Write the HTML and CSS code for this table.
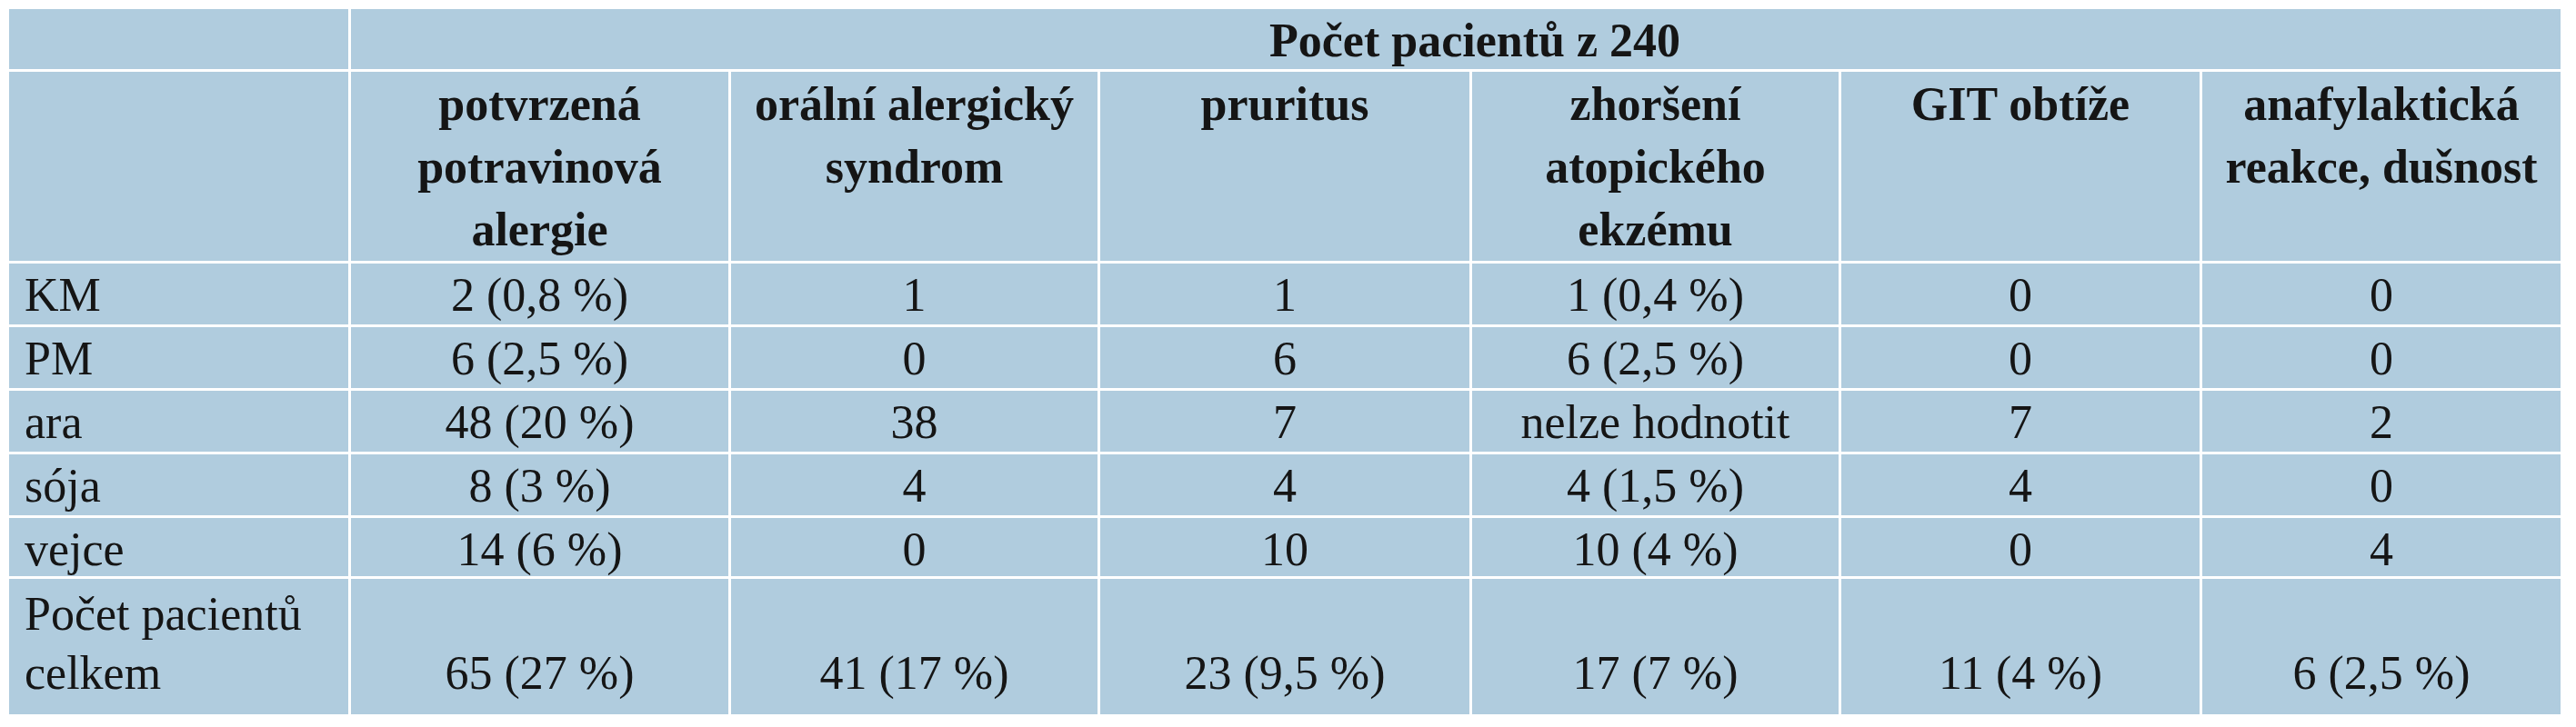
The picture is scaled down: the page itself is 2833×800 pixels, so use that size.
FILE: index.html
```html
<!DOCTYPE html>
<html lang="cs">
<head>
<meta charset="utf-8">
<title>Počet pacientů z 240</title>
<link rel="stylesheet" href="styles.css">
</head>
<body>
<table class="tbl">
  <colgroup>
    <col class="c0"><col class="c1"><col class="c2"><col class="c3"><col class="c4"><col class="c5"><col class="c6">
  </colgroup>
  <tr class="r-title">
    <td class="lbl"></td>
    <td class="title" colspan="6">Počet pacientů z 240</td>
  </tr>
  <tr class="r-head">
    <td class="lbl"></td>
    <td>potvrzená<br>potravinová<br>alergie</td>
    <td>orální alergický<br>syndrom</td>
    <td>pruritus</td>
    <td>zhoršení<br>atopického<br>ekzému</td>
    <td>GIT obtíže</td>
    <td>anafylaktická<br>reakce, dušnost</td>
  </tr>
  <tr class="r-data">
    <td class="lbl">KM</td><td>2 (0,8 %)</td><td>1</td><td>1</td><td>1 (0,4 %)</td><td>0</td><td>0</td>
  </tr>
  <tr class="r-data">
    <td class="lbl">PM</td><td>6 (2,5 %)</td><td>0</td><td>6</td><td>6 (2,5 %)</td><td>0</td><td>0</td>
  </tr>
  <tr class="r-data">
    <td class="lbl">ara</td><td>48 (20 %)</td><td>38</td><td>7</td><td>nelze hodnotit</td><td>7</td><td>2</td>
  </tr>
  <tr class="r-data">
    <td class="lbl">sója</td><td>8 (3 %)</td><td>4</td><td>4</td><td>4 (1,5 %)</td><td>4</td><td>0</td>
  </tr>
  <tr class="r-data r-short">
    <td class="lbl">vejce</td><td>14 (6 %)</td><td>0</td><td>10</td><td>10 (4 %)</td><td>0</td><td>4</td>
  </tr>
  <tr class="r-total">
    <td class="lbl">Počet pacientů<br>celkem</td><td>65 (27 %)</td><td>41 (17 %)</td><td>23 (9,5 %)</td><td>17 (7 %)</td><td>11 (4 %)</td><td>6 (2,5 %)</td>
  </tr>
</table>
</body>
</html>
```

FILE: styles.css
```css
html, body {
  margin: 0;
  padding: 0;
  background: #ffffff;
}

.tbl {
  margin: 7px;
  width: 2812px;
  table-layout: fixed;
  border-collapse: separate;
  border-spacing: 3px;
  font-family: "Liberation Serif", "Times New Roman", serif;
  font-size: 52px;
  color: #151515;
}

.c0 { width: 373px; }
.c1 { width: 415px; }
.c2 { width: 403px; }
.c3 { width: 406px; }
.c4 { width: 403px; }
.c5 { width: 394px; }
.c6 { width: 394px; }

.tbl td {
  background: #b0ccde;
  text-align: center;
  vertical-align: top;
  padding: 5px 0 2px 0;
  line-height: 60px;
  white-space: nowrap;
  overflow: hidden;
}

.tbl td.lbl {
  text-align: left;
  padding-left: 17px;
}

.r-title td {
  padding: 5px 0 1px 0;
  font-weight: bold;
}

.r-title td.title {
  padding-left: 42px;
}

.r-head td {
  font-weight: bold;
  line-height: 69px;
  padding: 1px 0 0 0;
}

.r-short td {
  line-height: 59px;
  padding-bottom: 0;
}

.r-total td {
  line-height: 65px;
  padding: 6px 0 13px 0;
  vertical-align: bottom;
}
```
